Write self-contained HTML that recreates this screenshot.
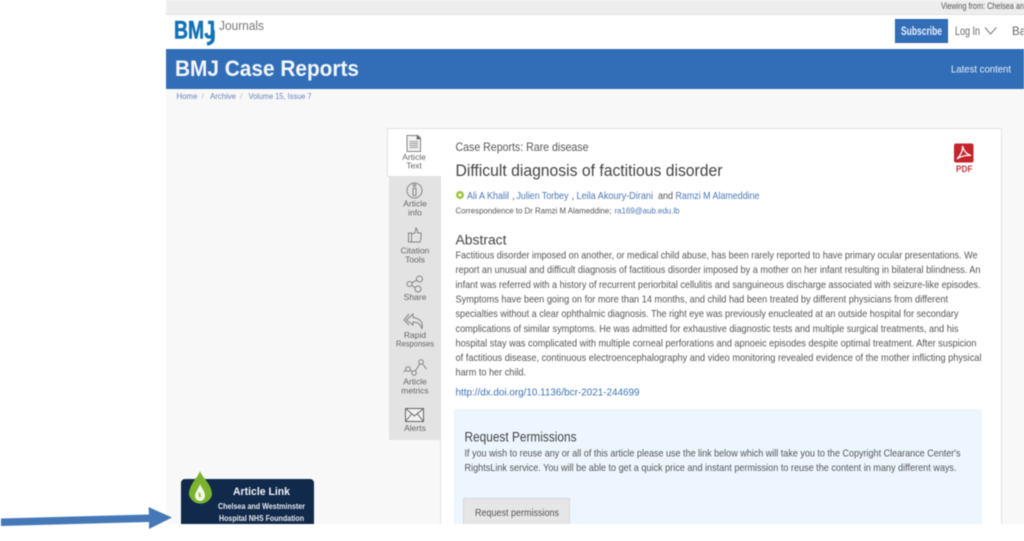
<!DOCTYPE html>
<html><head><meta charset="utf-8"><style>
html,body{margin:0;padding:0;background:#fff;width:1024px;height:541px;overflow:hidden}
svg{position:absolute;left:0;top:0;filter:blur(.5px)}
text{font-family:"Liberation Sans",sans-serif;white-space:pre}
</style></head><body>
<svg width="1024" height="541" viewBox="0 0 1024 541" xmlns="http://www.w3.org/2000/svg">
<!-- page -->
<rect x="166" y="0" width="858" height="524" fill="#f8f8f8"/>
<rect x="166" y="0" width="858" height="14" fill="#eeeeee"/>
<rect x="166" y="14" width="858" height="35" fill="#fff"/>
<rect x="166" y="14" width="858" height="1" fill="#e2e2e2"/>
<rect x="166" y="49" width="858" height="40" fill="#326eb8"/>
<text x="941" y="9" font-size="9" fill="#555" textLength="83" lengthAdjust="spacingAndGlyphs">Viewing from: Chelsea an</text>
<!-- logo -->
<text x="174" y="38.500" font-size="25" font-weight="700" fill="#1272b6" stroke="#1272b6" stroke-width=".5" textLength="41" lengthAdjust="spacingAndGlyphs">BMJ</text>
<path d="M213 30 V38 Q213 43 207 44" fill="none" stroke="#1272b6" stroke-width="3.500"/>
<text x="219" y="30" font-size="12.500" fill="#777" textLength="45" lengthAdjust="spacingAndGlyphs">Journals</text>
<!-- nav -->
<rect x="895.500" y="19.500" width="52" height="23" fill="#326eb8" stroke="#2a62a8"/>
<text x="901" y="35" font-size="11.500" font-weight="700" fill="#e8f0fa" textLength="41" lengthAdjust="spacingAndGlyphs">Subscribe</text>
<text x="955" y="35" font-size="11.500" fill="#666" textLength="25" lengthAdjust="spacingAndGlyphs">Log In</text>
<path d="M985 27.500 L990.500 34 L996.500 27.500" fill="none" stroke="#777" stroke-width="1"/>
<text x="1012" y="35" font-size="11.500" fill="#666">Bas</text>
<text x="175" y="76" font-size="22" font-weight="700" fill="#f4f7fb" textLength="184" lengthAdjust="spacingAndGlyphs">BMJ Case Reports</text>
<text x="951" y="72.500" font-size="10.500" fill="#e4edf8" textLength="60" lengthAdjust="spacingAndGlyphs">Latest content</text>
<!-- breadcrumbs -->
<g font-size="8.500" fill="#6a82b8">
<text x="176.500" y="99" textLength="21" lengthAdjust="spacingAndGlyphs">Home</text>
<text x="201.500" y="99" fill="#bbb">/</text>
<text x="210" y="99" textLength="26" lengthAdjust="spacingAndGlyphs">Archive</text>
<text x="240" y="99" fill="#bbb">/</text>
<text x="248.500" y="99" textLength="63" lengthAdjust="spacingAndGlyphs">Volume 15, Issue 7</text>
</g>
<!-- card -->
<rect x="440.500" y="128.500" width="561" height="396" fill="#fff" stroke="#e2e2e2"/>
<rect x="389" y="176" width="51" height="264" fill="#e3e3e3"/>
<rect x="387.500" y="128.500" width="53" height="48" fill="#fff" stroke="#e2e2e2"/>
<rect x="440" y="129" width="2" height="47" fill="#fff"/>
<!-- tab icons -->
<g fill="none" stroke="#858585" stroke-width="1">
<path d="M407 135.500 H418 L420.500 138 V151.500 H407 Z" fill="#f2f2f2"/>
<path d="M417 135.500 L420.500 139 H417 Z" fill="#333"/>
<path d="M409.500 141.500 H418 M409.500 143.500 H418 M409.500 145.500 H418 M409.500 147.500 H418" stroke="#999"/>
<circle cx="414.500" cy="190.500" r="7.500"/>
<path d="M413 188.500 H416 V195.500 H413 Z"/>
<circle cx="414.500" cy="185.500" r="1.300"/>
<path d="M408.500 233 H411.500 V242 H408.500 Z M411.500 234 L415 233 L416 228 Q418 230 417.500 233 L421 233 Q421.500 238 420 242 H411.500"/>
<circle cx="409.500" cy="284" r="2.500"/><circle cx="419.500" cy="279" r="3"/><circle cx="418" cy="289" r="3"/>
<path d="M411.500 283 L417 280 M411.500 285 L415.500 288"/>
<path d="M413 314 L406.500 320 L413 325 V322 Q420 322 422 329 Q424 319 413 317.500 Z" />
<path d="M409 314 L404 320 L409 325" />
<path d="M403.500 372 L408 368.500 L414 373 L421 362 L426.500 369"/>
<circle cx="408" cy="369" r="2.300" fill="#e3e3e3"/><circle cx="414" cy="373" r="2.300" fill="#e3e3e3"/><circle cx="421" cy="362" r="2.300" fill="#e3e3e3"/>
<rect x="405.500" y="408.500" width="18" height="13" stroke="#666" fill="#f0f0f0"/>
<path d="M405.500 408.500 L414.500 416 L423.500 408.500 M405.500 421.500 L411.500 414 M423.500 421.500 L417.500 414" stroke="#666"/>
</g>
<g font-size="8.500" fill="#666" text-anchor="middle">
<text x="414" y="160">Article</text><text x="414" y="168.500">Text</text>
<text x="415" y="206.500">Article</text><text x="415" y="215.500">info</text>
<text x="415" y="253.500">Citation</text><text x="415" y="262.500">Tools</text>
<text x="415" y="300">Share</text>
<text x="415" y="338">Rapid</text><text x="415" y="346.500" textLength="38" lengthAdjust="spacingAndGlyphs">Responses</text>
<text x="415" y="384.500">Article</text><text x="415" y="393.500">metrics</text>
<text x="415" y="431">Alerts</text>
</g>
<!-- heading -->
<text x="455.500" y="151" font-size="12" fill="#555" textLength="133" lengthAdjust="spacingAndGlyphs">Case Reports: Rare disease</text>
<text x="455.500" y="176" font-size="16.500" fill="#444" textLength="267" lengthAdjust="spacingAndGlyphs">Difficult diagnosis of factitious disorder</text>
<circle cx="460" cy="195" r="4" fill="#9cc63a"/><circle cx="460" cy="195" r="1.500" fill="#fff"/>
<g font-size="10" fill="#4a78b8">
<text x="467" y="199" textLength="42" lengthAdjust="spacingAndGlyphs">Ali A Khalil</text>
<text x="512" y="199" fill="#555">,</text>
<text x="516.500" y="199" textLength="52" lengthAdjust="spacingAndGlyphs">Julien Torbey</text>
<text x="571.500" y="199" fill="#555">,</text>
<text x="576.500" y="199" textLength="76.500" lengthAdjust="spacingAndGlyphs">Leila Akoury-Dirani</text>
<text x="658" y="199" fill="#555" textLength="15" lengthAdjust="spacingAndGlyphs">and</text>
<text x="675.500" y="199" textLength="84" lengthAdjust="spacingAndGlyphs">Ramzi M Alameddine</text>
</g>
<text x="455.500" y="213.500" font-size="8" fill="#555" textLength="156" lengthAdjust="spacingAndGlyphs">Correspondence to Dr Ramzi M Alameddine;</text>
<text x="614.500" y="213.500" font-size="8" fill="#4a78b8" textLength="65" lengthAdjust="spacingAndGlyphs">ra169@aub.edu.lb</text>
<text x="455.500" y="244.500" font-size="13.500" fill="#444" textLength="51" lengthAdjust="spacingAndGlyphs">Abstract</text>
<!-- pdf -->
<rect x="954" y="143.500" width="19.500" height="19" rx="2" fill="#c4242b"/>
<path d="M957 159 C961 155 963 150 962.500 146 C964 151 966 154 971 155.500 C966 155 961 156 957 159 Z" fill="none" stroke="#fff" stroke-width="1.300"/>
<text x="956" y="172" font-size="8.800" font-weight="700" fill="#c4343a" textLength="16.500" lengthAdjust="spacingAndGlyphs">PDF</text>
<!-- abstract -->
<g font-size="10.400" fill="#555">
<text x="455.500" y="258.500" textLength="522" lengthAdjust="spacingAndGlyphs">Factitious disorder imposed on another, or medical child abuse, has been rarely reported to have primary ocular presentations. We</text>
<text x="455.500" y="273.200" textLength="525" lengthAdjust="spacingAndGlyphs">report an unusual and difficult diagnosis of factitious disorder imposed by a mother on her infant resulting in bilateral blindness. An</text>
<text x="455.500" y="287.800" textLength="525" lengthAdjust="spacingAndGlyphs">infant was referred with a history of recurrent periorbital cellulitis and sanguineous discharge associated with seizure-like episodes.</text>
<text x="455.500" y="302.500" textLength="492.500" lengthAdjust="spacingAndGlyphs">Symptoms have been going on for more than 14 months, and child had been treated by different physicians from different</text>
<text x="455.500" y="317.100" textLength="503" lengthAdjust="spacingAndGlyphs">specialties without a clear ophthalmic diagnosis. The right eye was previously enucleated at an outside hospital for secondary</text>
<text x="455.500" y="331.800" textLength="503" lengthAdjust="spacingAndGlyphs">complications of similar symptoms. He was admitted for exhaustive diagnostic tests and multiple surgical treatments, and his</text>
<text x="455.500" y="346.400" textLength="521" lengthAdjust="spacingAndGlyphs">hospital stay was complicated with multiple corneal perforations and apnoeic episodes despite optimal treatment. After suspicion</text>
<text x="455.500" y="361" textLength="526" lengthAdjust="spacingAndGlyphs">of factitious disease, continuous electroencephalography and video monitoring revealed evidence of the mother inflicting physical</text>
<text x="455.500" y="375.700" textLength="70.500" lengthAdjust="spacingAndGlyphs">harm to her child.</text>
</g>
<text x="455.500" y="395.500" font-size="10.400" fill="#3f73b5" textLength="184" lengthAdjust="spacingAndGlyphs">http://dx.doi.org/10.1136/bcr-2021-244699</text>
<!-- permissions -->
<rect x="454" y="409" width="528" height="115" fill="#edf6fe"/>
<text x="464.500" y="441.500" font-size="13.500" fill="#444" textLength="112" lengthAdjust="spacingAndGlyphs">Request Permissions</text>
<text x="464.500" y="456.500" font-size="10.400" fill="#555" textLength="496" lengthAdjust="spacingAndGlyphs">If you wish to reuse any or all of this article please use the link below which will take you to the Copyright Clearance Center's</text>
<text x="464.500" y="471" font-size="10.400" fill="#555" textLength="492" lengthAdjust="spacingAndGlyphs">RightsLink service. You will be able to get a quick price and instant permission to reuse the content in many different ways.</text>
<rect x="463.500" y="498.500" width="106" height="27" fill="#e6e6e6" stroke="#d6d6d6"/>
<text x="475" y="516" font-size="10.400" fill="#555" textLength="84" lengthAdjust="spacingAndGlyphs">Request permissions</text>
<!-- article link badge -->
<rect x="181" y="479" width="133" height="50" rx="4" fill="#11294a"/>
<path d="M200 471 C203 479 212 484 212 495 A12 12 0 0 1 189 495 C189 484 197 479 200 471 Z" fill="#7cb32c"/>
<path d="M200 484 C202 489 205 491 205 496 A5 5 0 0 1 195 496 C195 492 198 490 200 484 Z" fill="#f2f8e8"/>
<path d="M199 492 Q202 495 200 498 Q198 496 199 492Z" fill="#8dbd3a"/>
<text x="233" y="495" font-size="11" font-weight="700" fill="#f2f4f7" textLength="57" lengthAdjust="spacingAndGlyphs">Article Link</text>
<text x="218" y="509" font-size="8" font-weight="700" fill="#e8ebf0" textLength="87" lengthAdjust="spacingAndGlyphs">Chelsea and Westminster</text>
<text x="219" y="521" font-size="8" font-weight="700" fill="#e8ebf0" textLength="85" lengthAdjust="spacingAndGlyphs">Hospital NHS Foundation</text>
<!-- bottom white mask -->
<rect x="0" y="524" width="1024" height="17" fill="#fff"/>
<!-- arrow -->
<path d="M1 518.500 L149 514.500 L148.500 507 L172 517.500 L149 529 L149 522 L1 526 Z" fill="#4678b8"/>
</svg>
</body></html>
